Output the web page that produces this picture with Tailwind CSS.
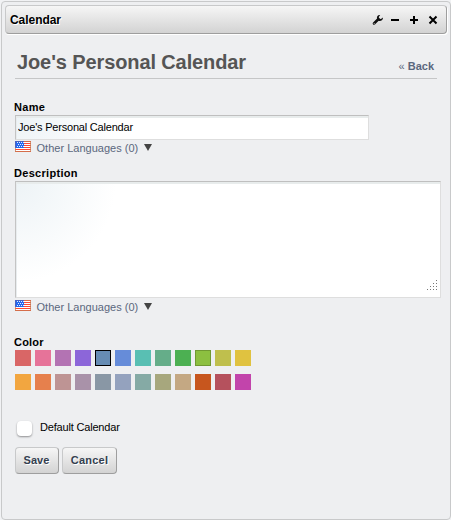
<!DOCTYPE html>
<html lang="en">
<head>
<meta charset="utf-8">
<title>Calendar</title>
<script src="https://cdn.jsdelivr.net/npm/@tailwindcss/browser@4"></script>
</head>
<body class="h-[520px] w-[451px] overflow-hidden bg-[#f1f2f4] pt-px pl-px font-['Liberation_Sans',Arial,sans-serif] text-[11px] leading-[13px] text-black">
<svg class="hidden">
  <symbol id="flag" viewBox="0 0 16 11">
    <rect width="16" height="11" fill="#fff"/>
    <path d="M0 .5h16M0 2.5h16M0 4.5h16M0 6.5h16M0 8.5h16M0 10.5h16" stroke="#fb4a35"/>
    <path d="M0 10.5h16M15.500 0v11M9 .5h7" stroke="#c97952" opacity=".75"/>
    <rect width="9" height="7" fill="#2468f0"/>
    <path d="M2 1.500h7M3 3.500h6M2 5.500h7" stroke="#e4eeff" stroke-dasharray="1 1"/>
    <path d="M.5 7V.5H9" fill="none" stroke="#5560b0" opacity=".8"/>
    <path d="M.5 7v4" stroke="#c97952" opacity=".75"/>
  </symbol>
</svg>
<div class="h-[519px] w-[450px] rounded-[4px] border border-[#c8c9ca] bg-[#eeeff1] px-[3px] pt-[3px]">
  <header class="flex h-[29px] w-[442px] items-center rounded-[4px] border border-[#c8c9ca] border-r-[#9e9e9e] border-b-[#9e9e9e] bg-linear-to-b from-[#f6f6f6] to-[#d3d3d3] pr-[7px] pl-[4px] shadow-[0_1px_0_#fff,1px_1px_0_#fff]">
    <h1 class="mt-px grow text-[12px] font-bold tracking-[-0.05px] [text-shadow:1px_1px_#fff]">Calendar</h1>
    <svg class="h-[12px] w-[68px]" viewBox="0 0 68 12">
      <path d="M3 9.500L7.500 5" stroke="#111" stroke-width="2.600" stroke-linecap="round"/>
      <path d="M9.200 1C6.500.8 5.300 3 6.200 5.200L7.500 6.800C10 7.500 12.200 6 11.900 3.400L10 5L8 4.700L7.800 3Z" fill="#111"/>
      <path d="M2.700 9.200h1v1h-1z" fill="#ddd"/>
      <path d="M20 6h8M39 6h8M43 2v8" stroke="#000" stroke-width="2"/>
      <path d="M58.500 2.500l7 7M65.500 2.500l-7 7" stroke="#000" stroke-width="2"/>
    </svg>
  </header>
  <main class="pl-[10px]">
    <div class="flex h-[45px] w-[422px] items-start justify-between border-b border-[#c5c6c7] pt-[16px] pr-[3px] pl-[2px]">
      <h2 class="text-[20px] leading-[24px] font-bold tracking-[-0.11px] whitespace-nowrap text-[#555]">Joe's Personal Calendar</h2>
      <a class="mt-[10px] font-bold whitespace-nowrap text-[#5b677d]"><span class="font-normal">«</span> Back</a>
    </div>
    <label class="mt-[22px] -ml-px block h-[14px] font-bold tracking-[0.3px]">Name</label>
    <input class="block h-[25px] w-[354px] border border-[#dedede] border-t-[#bfbfbf] border-l-[#c4c4c4] bg-white bg-radial-[circle_at_0_0] from-[#edf3f6] to-white to-[100px] pb-[2px] pl-[2px] tracking-[-0.2px] shadow-[inset_0_2px_0_#e8ecec,inset_1px_0_0_#e8ecee] outline-none" value="Joe's Personal Calendar">
    <div class="mt-px flex h-[13px] items-start text-[#5b677d]">
      <svg class="h-[11px] w-[16px]"><use href="#flag"/></svg>
      <span class="mt-[1px] ml-[5.500px] w-[107.500px] whitespace-nowrap tracking-[0.01px]">Other Languages (0)</span>
      <svg class="mt-[3px] h-[7px] w-[8px]"><path d="M0 0h8L4 7z" fill="#444"/></svg>
    </div>
    <label class="mt-[13px] -ml-px block h-[14px] font-bold tracking-[0.3px]">Description</label>
    <div class="flex h-[117px] w-[426px] items-end justify-end border border-[#dedede] border-t-[#bfbfbf] border-l-[#c4c4c4] bg-white bg-radial-[circle_at_0_0] from-[#edf3f6] to-white to-[100px] pr-[3px] pb-[7px] shadow-[inset_0_2px_0_#e8ecec,inset_1px_0_0_#e8ecee]">
      <svg class="h-[10px] w-[10px]"><path d="M9 0h1v1h-1zM6 3h1v1h-1zM9 3h1v1h-1zM3 6h1v1h-1zM6 6h1v1h-1zM9 6h1v1h-1zM0 9h1v1h-1zM3 9h1v1h-1zM6 9h1v1h-1zM9 9h1v1h-1z" fill="#777"/></svg>
    </div>
    <div class="mt-[2px] flex h-[13px] items-start text-[#5b677d]">
      <svg class="h-[11px] w-[16px]"><use href="#flag"/></svg>
      <span class="mt-[1px] ml-[5.500px] w-[107.500px] whitespace-nowrap tracking-[0.01px]">Other Languages (0)</span>
      <svg class="mt-[3px] h-[7px] w-[8px]"><path d="M0 0h8L4 7z" fill="#444"/></svg>
    </div>
    <label class="mt-[23px] -ml-px block h-[14px] font-bold tracking-[0.2px]">Color</label>
    <div class="grid w-[240px] grid-cols-12 gap-y-[8px]">
      <i class="size-[16px] bg-[#d96666]"></i><i class="size-[16px] bg-[#e67399]"></i><i class="size-[16px] bg-[#b373b3]"></i><i class="size-[16px] bg-[#8c66d9]"></i><i class="size-[16px] border border-black bg-[#668cb3]"></i><i class="size-[16px] bg-[#668cd9]"></i><i class="size-[16px] bg-[#59bfb3]"></i><i class="size-[16px] bg-[#65ad89]"></i><i class="size-[16px] bg-[#4cb052]"></i><i class="size-[16px] border border-[#709932] bg-[#8cbf40]"></i><i class="size-[16px] bg-[#bfbf4d]"></i><i class="size-[16px] bg-[#e0c240]"></i>
      <i class="size-[16px] bg-[#f2a640]"></i><i class="size-[16px] bg-[#e6804d]"></i><i class="size-[16px] bg-[#be9494]"></i><i class="size-[16px] bg-[#a992a9]"></i><i class="size-[16px] bg-[#8997a5]"></i><i class="size-[16px] bg-[#94a2be]"></i><i class="size-[16px] bg-[#85aaa5]"></i><i class="size-[16px] bg-[#a7a77d]"></i><i class="size-[16px] bg-[#c4a883]"></i><i class="size-[16px] bg-[#c7561e]"></i><i class="size-[16px] bg-[#b5515d]"></i><i class="size-[16px] bg-[#c244ab]"></i>
    </div>
    <div class="mt-[30px] flex h-[17px] items-start">
      <input type="checkbox" class="mt-px ml-[2px] size-[15px] appearance-none rounded-[4px] bg-white shadow-[0_1px_2px_#00000066]">
      <label class="mt-[1px] ml-[8px] tracking-[-0.18px]">Default Calendar</label>
    </div>
    <div class="mt-[10px] flex gap-[3px] font-bold text-[#34404f]">
      <button class="h-[27px] w-[44px] rounded-[4px] border border-[#c8c9ca] border-r-[#9e9e9e] border-b-[#9e9e9e] bg-linear-to-b from-[#f6f6f6] to-[#d3d3d3] pr-px font-bold tracking-[0.1px] [text-shadow:1px_1px_#fff]">Save</button>
      <button class="h-[27px] w-[55px] rounded-[4px] border border-[#c8c9ca] border-r-[#9e9e9e] border-b-[#9e9e9e] bg-linear-to-b from-[#f6f6f6] to-[#d3d3d3] font-bold tracking-[0.2px] [text-shadow:1px_1px_#fff]">Cancel</button>
    </div>
  </main>
</div>
</body>
</html>
